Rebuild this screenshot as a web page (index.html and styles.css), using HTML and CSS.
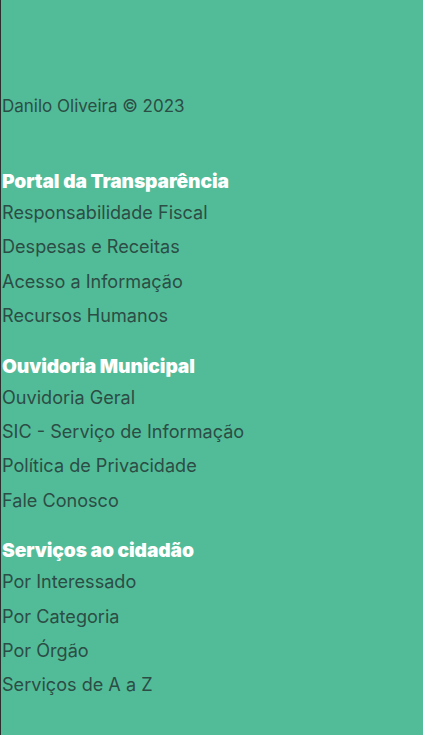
FILE: index.html
```html
<!DOCTYPE html>
<html lang="pt-BR">
<head>
<meta charset="utf-8">
<link rel="stylesheet" href="styles.css">
</head>
<body>
<footer class="footer">
  <p class="copyright">Danilo Oliveira © 2023</p>
  <section class="group">
    <h3 class="group-title">Portal da Transparência</h3>
    <ul class="links">
      <li>Responsabilidade Fiscal</li>
      <li>Despesas e Receitas</li>
      <li>Acesso a Informação</li>
      <li>Recursos Humanos</li>
    </ul>
  </section>
  <section class="group">
    <h3 class="group-title">Ouvidoria Municipal</h3>
    <ul class="links">
      <li>Ouvidoria Geral</li>
      <li>SIC - Serviço de Informação</li>
      <li>Política de Privacidade</li>
      <li>Fale Conosco</li>
    </ul>
  </section>
  <section class="group">
    <h3 class="group-title">Serviços ao cidadão</h3>
    <ul class="links">
      <li>Por Interessado</li>
      <li>Por Categoria</li>
      <li>Por Órgão</li>
      <li>Serviços de A a Z</li>
    </ul>
  </section>
</footer>
</body>
</html>
```
FILE: styles.css
```css
html, body {
  margin: 0;
  padding: 0;
}
body {
  background: #52bc98;
  min-height: 100vh;
  border-left: 1px solid #2b2f2e;
  box-sizing: border-box;
  font-family: Inter, "Noto Sans", sans-serif;
  color: #2c4d45;
}
.footer {
  padding: 94px 0 0 1px;
  display: flex;
  flex-direction: column;
  gap: 21px;
}
.copyright {
  margin: 0 0 30px;
  font-size: 17px;
  line-height: 24px;
}
.group-title {
  margin: 0 0 2px;
  font-size: 19.2px;
  line-height: 24px;
  font-weight: 900;
  color: #ffffff;
  letter-spacing: -0.1px;
}
.links {
  list-style: none;
  margin: 0;
  padding: 0;
}
.links li {
  font-size: 18.1px;
  line-height: 34.4px;
}
```
